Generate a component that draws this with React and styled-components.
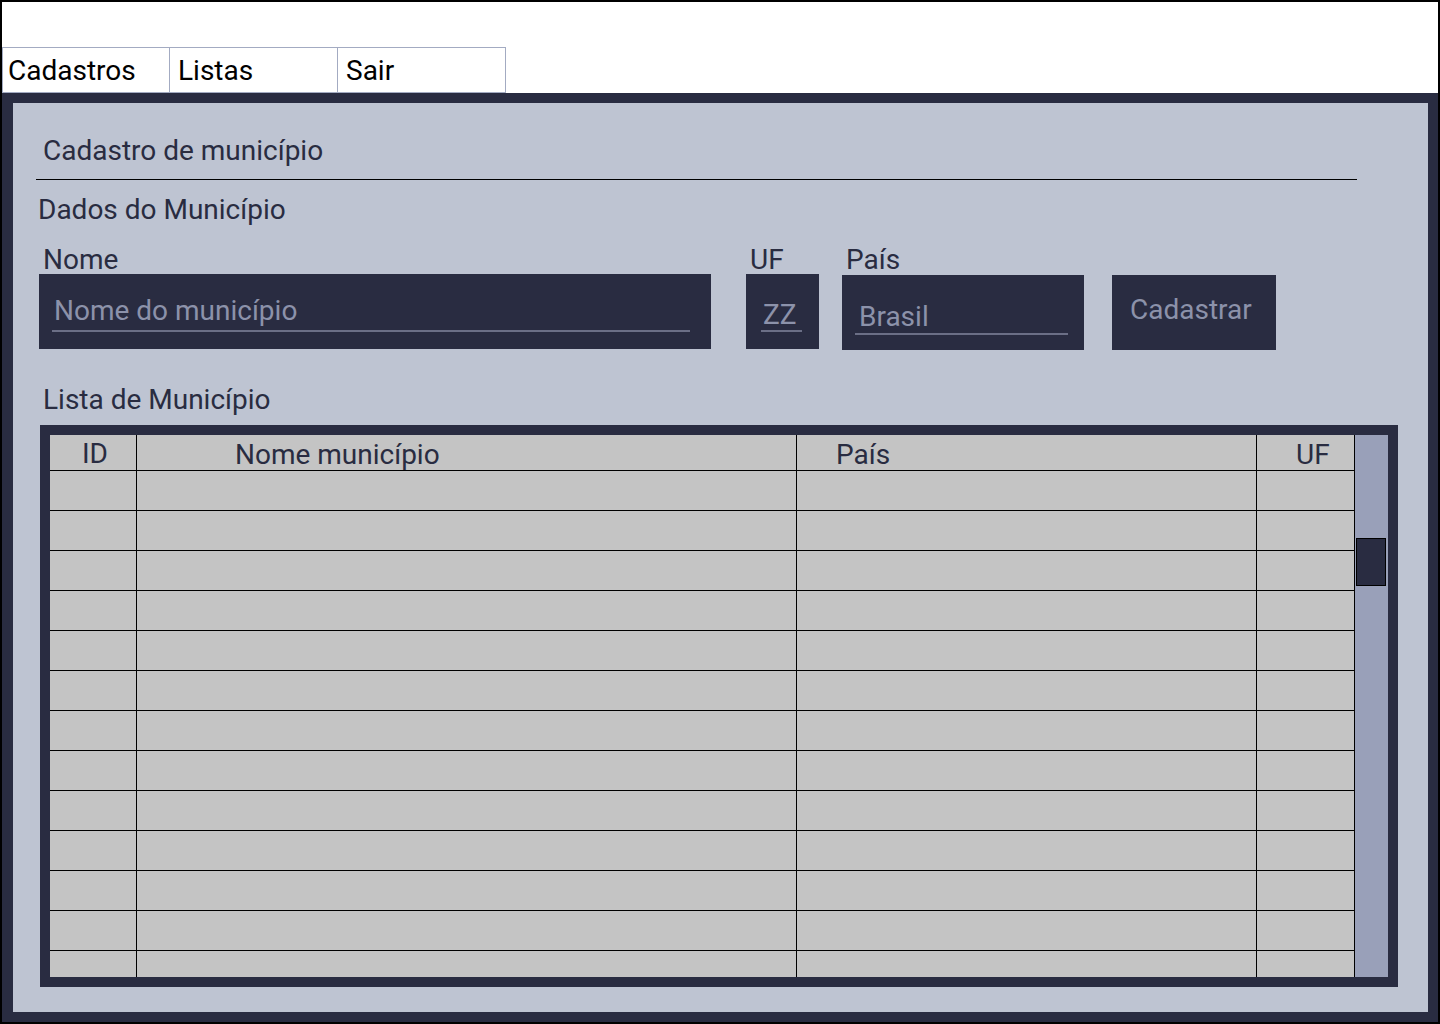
import React from 'react';
import styled, { createGlobalStyle } from 'styled-components';

const dark = '#292c41';
const panel = '#bec4d2';

const GlobalStyle = createGlobalStyle`
  html, body {
    margin: 0;
    padding: 0;
    background: #fff;
  }
  * {
    box-sizing: border-box;
  }
`;

const Page = styled.div`
  width: 1440px;
  height: 1024px;
  border: 2px solid #000;
  display: flex;
  flex-direction: column;
  font-family: Roboto, "Liberation Sans", sans-serif;
  font-size: 28px;
  line-height: 33px;
  background: #fff;
`;

const Header = styled.div`
  height: 91px;
  display: flex;
  align-items: flex-end;
`;

const Menu = styled.nav`
  display: flex;
`;

const Tab = styled.div`
  height: 46px;
  border: 1px solid #a3abc2;
  margin-left: ${(p) => (p.$first ? '0' : '-1px')};
  width: ${(p) => (p.$first ? '168px' : '169px')};
  padding-left: ${(p) => (p.$first ? '5px' : '8px')};
  padding-top: 6px;
  color: #000;
  background: #fff;
`;

const Frame = styled.div`
  flex: 1;
  background: ${dark};
  padding: 10px 10px 10px 11px;
  display: flex;
`;

const Panel = styled.main`
  flex: 1;
  background: ${panel};
  color: ${dark};
  display: flex;
  flex-direction: column;
  padding-top: 31px;
`;

const Title = styled.h1`
  margin: 0 0 0 30px;
  font-size: 28px;
  font-weight: 400;
  line-height: 33px;
`;

const Rule = styled.hr`
  margin: 12px 0 0 23px;
  width: 1321px;
  height: 1px;
  border: none;
  background: #000;
`;

const Section = styled.h2`
  margin: ${(p) => p.$mt}px 0 0 ${(p) => p.$ml}px;
  font-size: 28px;
  font-weight: 400;
  line-height: 33px;
`;

const FormRow = styled.div`
  display: flex;
  align-items: flex-start;
  margin: 17px 0 0 26px;
`;

const Field = styled.div`
  display: flex;
  flex-direction: column;
  margin-right: ${(p) => p.$gap}px;
`;

const Label = styled.label`
  padding-left: 4px;
  height: ${(p) => p.$h || 31}px;
  line-height: 33px;
`;

const InputBox = styled.div`
  width: ${(p) => p.$w}px;
  height: 75px;
  background: ${dark};
  padding: ${(p) => p.$pt}px ${(p) => p.$pr}px 0 ${(p) => p.$pl}px;
`;

const Input = styled.input`
  display: block;
  width: 100%;
  border: none;
  border-bottom: 2px solid #6b6f86;
  background: transparent;
  font-family: Roboto, "Liberation Sans", sans-serif;
  font-size: 28px;
  line-height: 33px;
  height: ${(p) => p.$h}px;
  padding: 0 0 ${(p) => p.$pb || 0}px ${(p) => p.$tx}px;
  color: #8c92aa;
  outline: none;
  &::placeholder {
    color: #8c92aa;
  }
`;

const Button = styled.button`
  margin-top: 32px;
  width: 164px;
  height: 75px;
  background: ${dark};
  border: none;
  color: #8c92aa;
  font-family: Roboto, "Liberation Sans", sans-serif;
  font-size: 28px;
  line-height: 33px;
  padding: 0 0 6px 18px;
  text-align: left;
`;

const TableFrame = styled.div`
  margin: 9px 0 0 27px;
  width: 1358px;
  height: 562px;
  background: ${dark};
  padding: 10px;
  display: flex;
`;

const Table = styled.div`
  width: 1305px;
  height: 542px;
  overflow: hidden;
  background: #c4c4c4;
  display: grid;
  grid-template-columns: 87px 660px 460px 98px;
  grid-template-rows: 36px;
  grid-auto-rows: 40px;
  align-content: start;
`;

const HeadCell = styled.div`
  border-right: 1px solid #000;
  border-bottom: 1px solid #000;
  padding: ${(p) => p.$pt || 3}px 0 0 ${(p) => p.$pl}px;
  line-height: 33px;
  color: ${dark};
  white-space: nowrap;
`;

const Cell = styled.div`
  border-right: 1px solid #000;
  border-bottom: 1px solid #000;
`;

const Scrollbar = styled.div`
  width: 33px;
  background: #99a0b9;
  padding: 103px 2px 0 0;
  display: flex;
  justify-content: flex-end;
  align-items: flex-start;
`;

const Thumb = styled.div`
  width: 30px;
  height: 48px;
  background: ${dark};
  border: 1px solid #000;
`;

const rows = Array.from({ length: 13 }, (_, i) => i);

export default function App() {
  return (
    <>
      <GlobalStyle />
      <Page>
        <Header>
          <Menu>
            <Tab $first>Cadastros</Tab>
            <Tab>Listas</Tab>
            <Tab>Sair</Tab>
          </Menu>
        </Header>
        <Frame>
          <Panel>
            <Title>Cadastro de município</Title>
            <Rule />
            <Section $mt={13} $ml={25}>Dados do Município</Section>
            <FormRow>
              <Field $gap={35}>
                <Label>Nome</Label>
                <InputBox $w={672} $pt={18} $pr={21} $pl={13}>
                  <Input $h={40} $tx={2} $pb={2} placeholder="Nome do município" />
                </InputBox>
              </Field>
              <Field $gap={23}>
                <Label>UF</Label>
                <InputBox $w={73} $pt={25} $pr={17} $pl={15}>
                  <Input $h={33} $tx={2} defaultValue="ZZ" />
                </InputBox>
              </Field>
              <Field $gap={28}>
                <Label $h={32}>País</Label>
                <InputBox $w={242} $pt={25} $pr={16} $pl={13}>
                  <Input $h={35} $tx={4} defaultValue="Brasil" />
                </InputBox>
              </Field>
              <Button>Cadastrar</Button>
            </FormRow>
            <Section $mt={33} $ml={30}>Lista de Município</Section>
            <TableFrame>
              <Table>
                <HeadCell $pl={32} $pt={2}>ID</HeadCell>
                <HeadCell $pl={98}>Nome município</HeadCell>
                <HeadCell $pl={39}>País</HeadCell>
                <HeadCell $pl={39}>UF</HeadCell>
                {rows.map((r) => (
                  <React.Fragment key={r}>
                    <Cell />
                    <Cell />
                    <Cell />
                    <Cell />
                  </React.Fragment>
                ))}
              </Table>
              <Scrollbar>
                <Thumb />
              </Scrollbar>
            </TableFrame>
          </Panel>
        </Frame>
      </Page>
    </>
  );
}
